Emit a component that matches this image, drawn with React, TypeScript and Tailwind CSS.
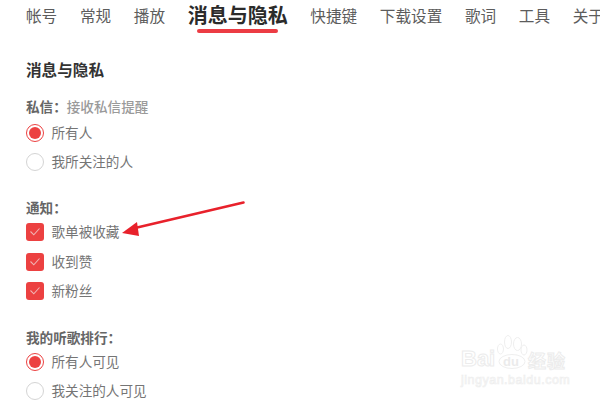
const font = { fontFamily: '"Noto Sans CJK SC", sans-serif' };

function Radio({ checked, label }: { checked?: boolean; label: string }) {
  return (
    <div className="flex h-[29px] items-center gap-[7.5px]">
      {checked ? (
        <span className="flex h-[18px] w-[18px] items-center justify-center rounded-full border border-[#ec4141]">
          <span className="h-[12px] w-[12px] rounded-full bg-[#ec4141]" />
        </span>
      ) : (
        <span className="h-[18px] w-[18px] rounded-full border border-[#d4d4d4]" />
      )}
      <span className="text-[13.6px] leading-none text-[#757575]">{label}</span>
    </div>
  );
}

function Check({ label }: { label: string }) {
  return (
    <div className="flex h-[29.5px] items-center gap-[7.5px]">
      <span className="flex h-[18px] w-[18px] items-center justify-center rounded-[3px] bg-[#ec4141]">
        <svg width="12" height="10" viewBox="0 0 12 10" fill="none">
          <path d="M1.5 4.5 L4.8 7.8 L10.5 1.5" stroke="#f0b4b4" strokeWidth="1.1" />
        </svg>
      </span>
      <span className="text-[13.6px] leading-none text-[#757575]">{label}</span>
    </div>
  );
}

function Label({ children }: { children: React.ReactNode }) {
  return <div className="flex h-[20px] items-center text-[13.6px] font-bold leading-none text-[#666666]">{children}</div>;
}

export default function App() {
  const tabs = ['帐号', '常规', '播放', '消息与隐私', '快捷键', '下载设置', '歌词', '工具', '关于'];
  return (
    <div className="relative h-[400px] w-[600px] overflow-hidden bg-white" style={font}>
      <nav className="flex h-[33px] items-start gap-[22.7px] whitespace-nowrap pl-[26px]">
        {tabs.map((t) =>
          t === '消息与隐私' ? (
            <div key={t} className="flex shrink-0 flex-col items-center">
              <span className="flex h-[29px] items-center text-[20px] font-bold leading-none text-[#2b2b2b]">{t}</span>
              <span className="h-[4px] w-[81px] rounded-full bg-[#ec3c44]" />
            </div>
          ) : (
            <span key={t} className="flex h-[32px] shrink-0 items-center text-[15.6px] leading-none text-[#5c5c5c]">
              {t}
            </span>
          ),
        )}
      </nav>

      <main className="pl-[26px]">
        <h2 className="mt-[27px] flex h-[20px] items-center text-[15.6px] font-bold leading-none text-[#333333]">消息与隐私</h2>

        <section className="mt-[17px]">
          <Label>
            私信：<span className="font-medium text-[#9a9a9a]">接收私信提醒</span>
          </Label>
          <div className="mt-[1px]">
            <Radio checked label="所有人" />
            <Radio label="我所关注的人" />
          </div>
        </section>

        <section className="mt-[21.5px]">
          <Label>通知：</Label>
          <div>
            <Check label="歌单被收藏" />
            <Check label="收到赞" />
            <Check label="新粉丝" />
          </div>
        </section>

        <section className="mt-[22px]">
          <Label>我的听歌排行：</Label>
          <div className="-mt-[1px]">
            <Radio checked label="所有人可见" />
            <Radio label="我关注的人可见" />
          </div>
        </section>
      </main>

      <svg className="absolute left-[115px] top-[195px]" width="135" height="50" viewBox="115 195 135 50" fill="none">
        <path d="M243.5 202.5 L135 228" stroke="#e8212b" strokeWidth="2.6" strokeLinecap="round" />
        <path d="M122 233 L137 222 L139 236 Z" fill="#e8212b" />
      </svg>

      <div className="pointer-events-none absolute left-[461px] top-[335px] h-[55px] w-[110px]">
        <svg className="absolute left-[36px] top-0" width="32" height="36" viewBox="0 0 32 36" fill="#fff" stroke="#efefef" strokeWidth="1">
          <ellipse cx="3.5" cy="14" rx="3" ry="5" />
          <ellipse cx="11" cy="7" rx="3.5" ry="6.5" />
          <ellipse cx="20.5" cy="9" rx="4" ry="6.5" />
          <ellipse cx="27" cy="15" rx="3" ry="5" />
          <ellipse cx="15" cy="26.5" rx="13" ry="7" />
        </svg>
        <span className="absolute left-[42px] top-[20px] text-[13px] font-bold leading-none text-[#ebebeb]" style={{ fontFamily: '"Liberation Sans", sans-serif' }}>du</span>
        <span className="absolute left-0 top-[13px] text-[22px] font-bold leading-none text-white [-webkit-text-stroke:1px_#ececec]" style={{ fontFamily: '"Liberation Sans", sans-serif' }}>Bai</span>
        <span className="absolute left-[67px] top-[16px] text-[18px] font-bold leading-none tracking-[1px] text-white [-webkit-text-stroke:1px_#ececec]">经验</span>
        <span className="absolute left-0 top-[39px] text-[12.5px] leading-none tracking-[0.5px] text-white [-webkit-text-stroke:0.7px_#eeeeee]" style={{ fontFamily: '"Liberation Sans", sans-serif' }}>
          jingyan.baidu.com
        </span>
      </div>
    </div>
  );
}
